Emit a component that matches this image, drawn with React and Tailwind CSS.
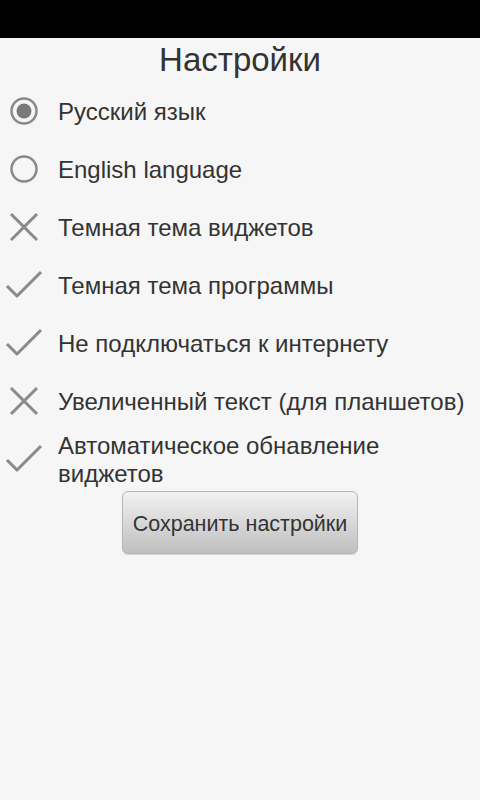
const rows = [
	{ icon: 'radioOn', text: 'Русский язык' },
	{ icon: 'radioOff', text: 'English language' },
	{ icon: 'cross', text: 'Темная тема виджетов' },
	{ icon: 'check', text: 'Темная тема программы' },
	{ icon: 'check', text: 'Не подключаться к интернету' },
	{ icon: 'cross', text: 'Увеличенный текст (для планшетов)' },
	{ icon: 'check', text: 'Автоматическое обнавление виджетов' },
]

const Icon = ({ type }) => {
	if (type === 'radioOn' || type === 'radioOff') {
		return (
			<svg width="32" height="32" viewBox="0 0 32 32">
				<circle cx="16" cy="16" r="12.5" fill="none" stroke="#8a8a8a" strokeWidth="2.5" />
				{type === 'radioOn' && <circle cx="16" cy="16" r="7.5" fill="#7a7a7a" />}
			</svg>
		)
	}
	if (type === 'cross') {
		return (
			<svg width="32" height="32" viewBox="0 0 32 32">
				<path d="M3 3 L29 29 M29 3 L3 29" stroke="#8a8a8a" strokeWidth="3" fill="none" />
			</svg>
		)
	}
	return (
		<svg width="40" height="32" viewBox="0 0 40 32">
			<path d="M3 17 L13 27 L37 3" stroke="#8a8a8a" strokeWidth="3" fill="none" strokeLinejoin="round" />
		</svg>
	)
}

const App = () => {
	return (
		<div className="w-[480px] h-[800px] bg-[#f6f6f6] flex flex-col" style={{ fontFamily: '"Liberation Sans", Arial, sans-serif' }}>
			<div className="w-full h-[38px] bg-black shrink-0"></div>
			<h1 className="h-[44px] leading-[44px] text-center text-[33px] text-[#333333]">Настройки</h1>
			<div className="flex flex-col">
				{rows.map((r, i) => (
					<div key={i} className="min-h-[58px] flex items-center">
						<div className="w-[48px] flex justify-center items-center shrink-0">
							<Icon type={r.icon} />
						</div>
						<span className="ml-[10px] pt-[2px] text-[24px] leading-[28px] text-[#333333] pr-2">{r.text}</span>
					</div>
				))}
			</div>
			<div className="flex justify-center mt-[3px]">
				<button className="w-[236px] h-[63px] pt-[3px] rounded-[6px] border border-[#b5b5b5] bg-gradient-to-b from-[#f2f2f2] to-[#bfbfbf] text-[21.5px] text-[#333333] shadow-[0_1px_1px_rgba(0,0,0,0.15)]">
					Сохранить настройки
				</button>
			</div>
		</div>
	)
}

export default App
